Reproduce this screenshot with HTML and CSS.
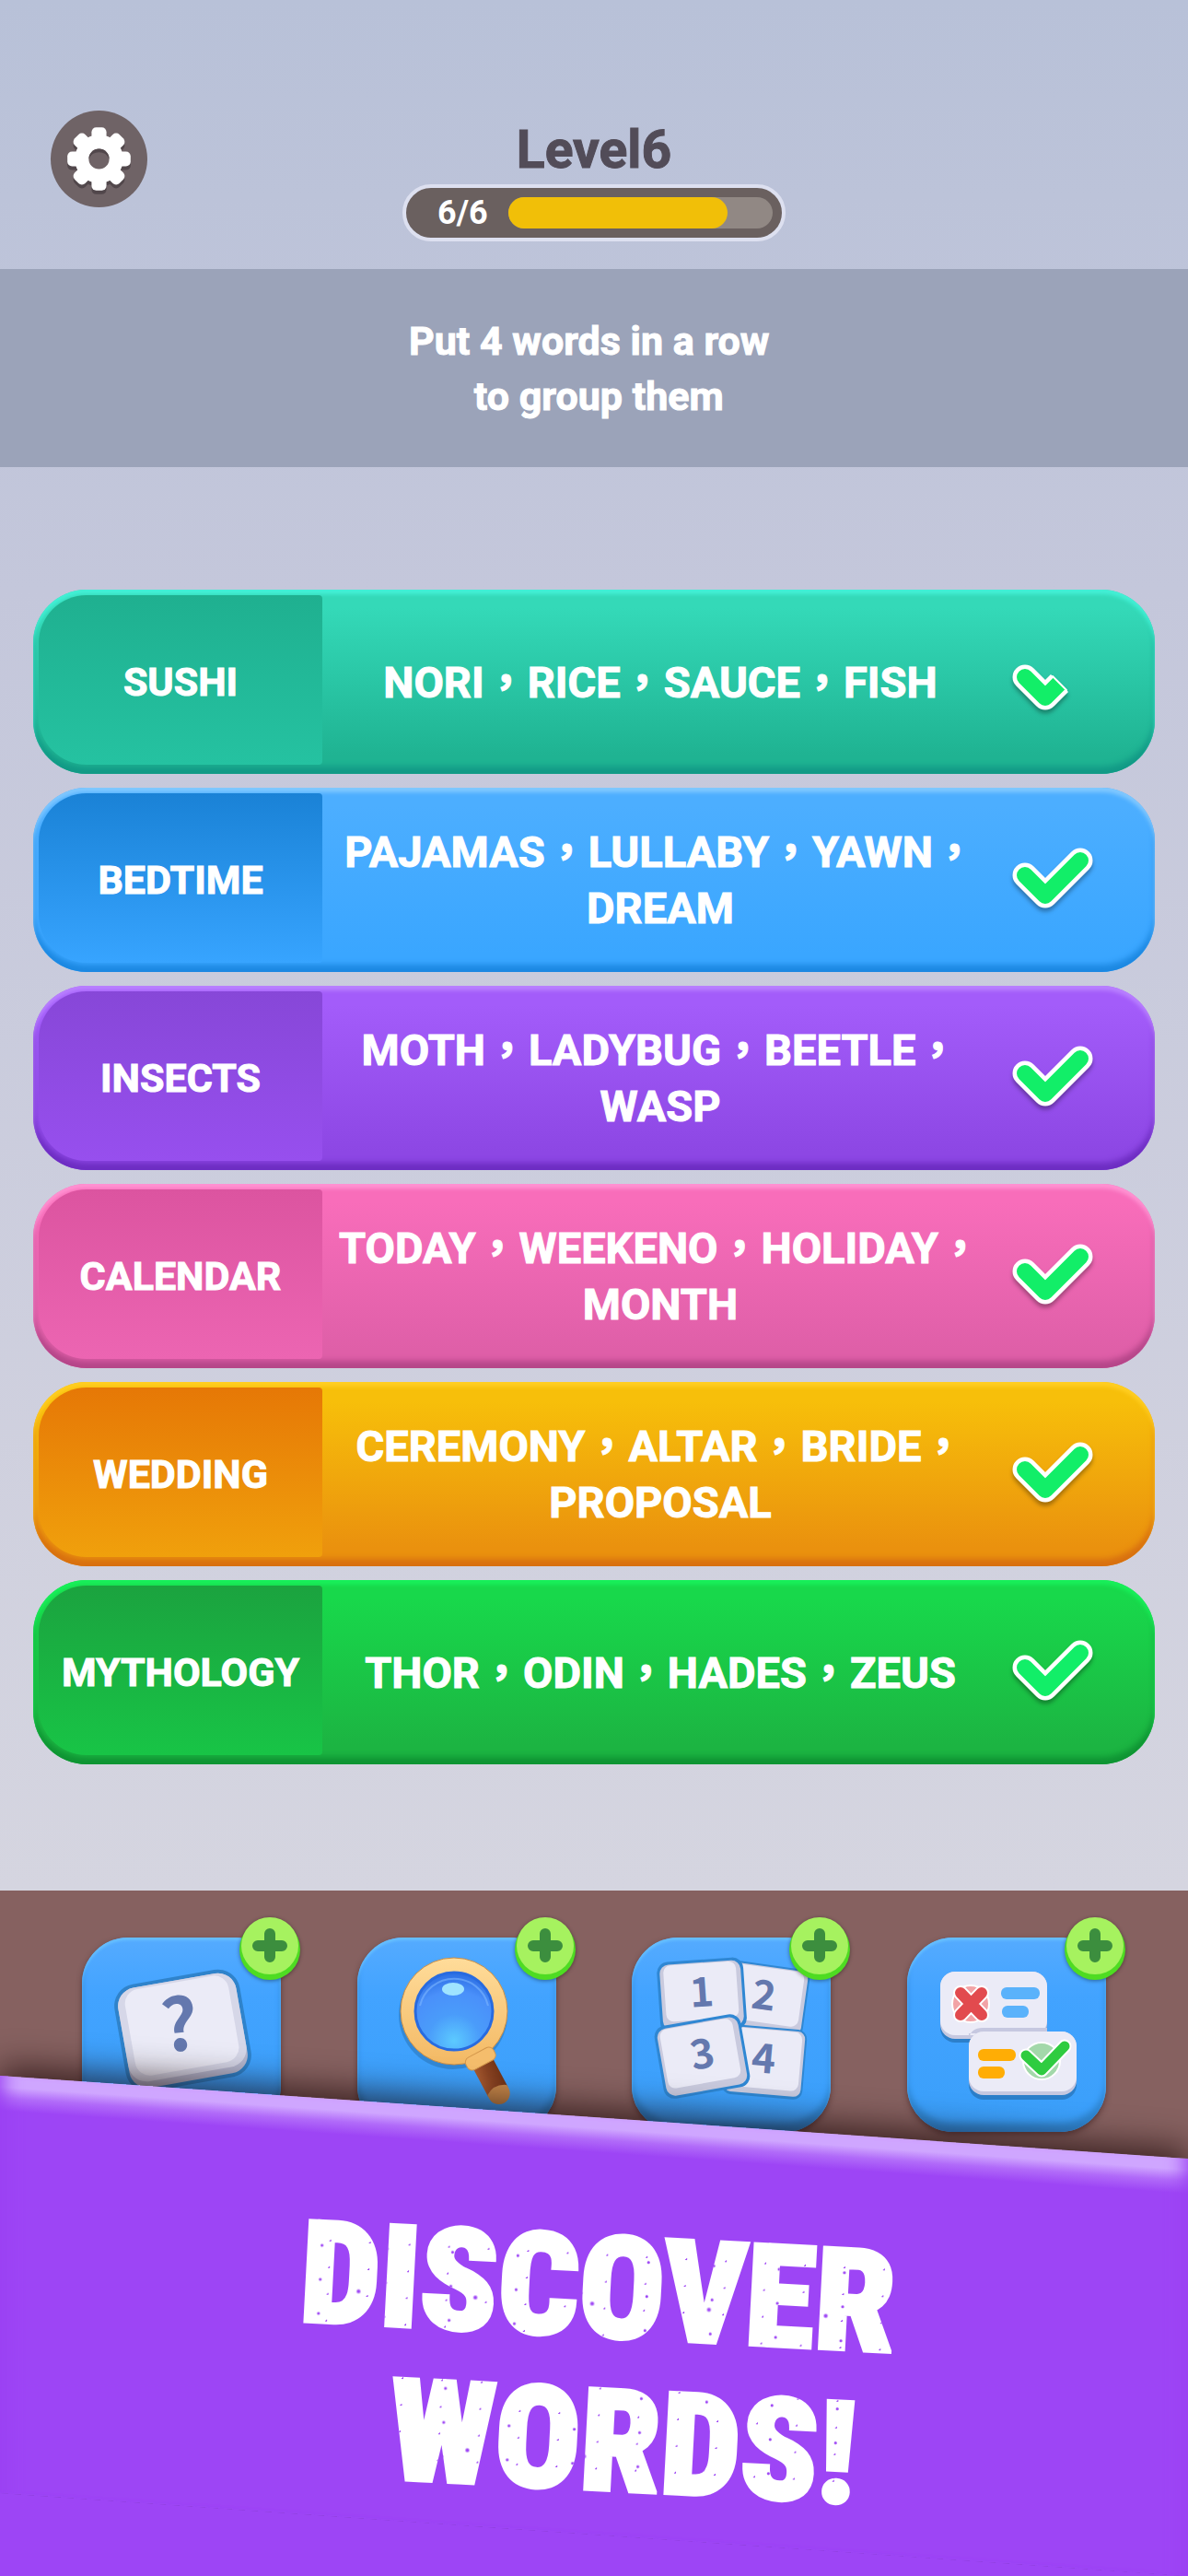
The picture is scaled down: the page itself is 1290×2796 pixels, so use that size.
FILE: index.html
```html
<!DOCTYPE html>
<html lang="en">
<head>
    <meta charset="UTF-8">
    <meta name="viewport" content="width=device-width, initial-scale=1.0">
    <title>Level6</title>
    <link rel="stylesheet" href="styles.css">
</head>
<body>
    <!-- shared shapes -->
    <svg class="defs" aria-hidden="true">
        <defs>
            <linearGradient id="gold" x1="0" y1="0" x2="0" y2="1">
                <stop offset="0" stop-color="#ffdc9a"/>
                <stop offset="1" stop-color="#f3b964"/>
            </linearGradient>
            <radialGradient id="glass" cx="50%" cy="88%" r="85%">
                <stop offset="0" stop-color="#5ccaff"/>
                <stop offset="0.4" stop-color="#4a9cfa"/>
                <stop offset="0.75" stop-color="#4a90fa"/>
                <stop offset="1" stop-color="#2f72e6"/>
            </radialGradient>
            <linearGradient id="wood" x1="0" y1="0" x2="1" y2="0">
                <stop offset="0" stop-color="#a85a30"/>
                <stop offset="0.5" stop-color="#8a4322"/>
                <stop offset="1" stop-color="#743518"/>
            </linearGradient>
            <clipPath id="half">
                <path d="M-10 -25 L68 53 L40 90 L-10 80 Z"/>
            </clipPath>
            <symbol id="check" viewBox="0 0 92 76">
                <path class="check-line" d="M16 32 L38 54 L76 16"/>
                <path class="check-fill" d="M16 32 L38 54 L76 16"/>
            </symbol>
            <symbol id="plus" viewBox="0 0 66 68">
                <circle cx="33" cy="35" r="33" fill="#4edc22"/>
                <circle cx="33" cy="31" r="31" fill="#a6f25f"/>
                <path d="M33 18 V43 M20 31 H46" stroke="#3c8e3e" stroke-width="12" stroke-linecap="round"/>
            </symbol>
            <g id="gear">
                <circle r="26"/>
                <rect x="-8" y="-34" width="16" height="68" rx="5"/>
                <rect x="-8" y="-34" width="16" height="68" rx="5" transform="rotate(45)"/>
                <rect x="-8" y="-34" width="16" height="68" rx="5" transform="rotate(90)"/>
                <rect x="-8" y="-34" width="16" height="68" rx="5" transform="rotate(135)"/>
            </g>
        </defs>
    </svg>

    <header class="topbar">
        <button class="settings" type="button" aria-label="Settings">
            <svg viewBox="-52 -52 104 104">
                <use href="#gear" y="4" fill="#51474b"/>
                <use href="#gear" fill="#fff"/>
                <circle r="11" fill="#6f6366"/>
                <path d="M-11 0 A11 11 0 0 1 11 0 A12 12 0 0 0 -11 0 Z" fill="#51474b"/>
            </svg>
        </button>
        <div class="level">
            <h1>Level6</h1>
            <div class="progress">
                <span>6/6</span>
                <div class="track"><div class="fill" style="width: 83%"></div></div>
            </div>
        </div>
    </header>

    <p class="hint">Put 4 words in a row&nbsp;<br>&nbsp;to group them</p>

    <ul class="groups">
        <li class="group teal">
            <h2>SUSHI</h2>
            <p>NORI，RICE，SAUCE，FISH</p>
            <svg class="check" viewBox="0 0 92 76">
                <g clip-path="url(#half)">
                    <path class="check-line" d="M16 32 L38 54 L76 16"/>
                    <path class="check-fill" d="M16 32 L38 54 L76 16"/>
                </g>
                <path d="M46 31 L61 46" stroke="#fff" stroke-width="2" stroke-linecap="round"/>
            </svg>
        </li>
        <li class="group blue">
            <h2>BEDTIME</h2>
            <p>PAJAMAS，LULLABY，YAWN，DREAM</p>
            <svg class="check"><use href="#check"/></svg>
        </li>
        <li class="group violet">
            <h2>INSECTS</h2>
            <p>MOTH，LADYBUG，BEETLE，WASP</p>
            <svg class="check"><use href="#check"/></svg>
        </li>
        <li class="group pink">
            <h2>CALENDAR</h2>
            <p>TODAY，WEEKENO，HOLIDAY，MONTH</p>
            <svg class="check"><use href="#check"/></svg>
        </li>
        <li class="group amber">
            <h2>WEDDING</h2>
            <p>CEREMONY，ALTAR，BRIDE，PROPOSAL</p>
            <svg class="check"><use href="#check"/></svg>
        </li>
        <li class="group green">
            <h2>MYTHOLOGY</h2>
            <p>THOR，ODIN，HADES，ZEUS</p>
            <svg class="check"><use href="#check"/></svg>
        </li>
    </ul>

    <nav class="tools">
        <button class="tool" type="button" aria-label="Hint">
            <svg viewBox="0 0 216 211">
                <g transform="translate(109 98) rotate(-10)">
                    <rect x="-69" y="-56" width="138" height="118" rx="24" fill="#2f83cb"/>
                    <rect x="-65" y="-52" width="130" height="110" rx="20" fill="#b6b8d0"/>
                    <rect x="-65" y="-52" width="130" height="103" rx="20" fill="#d6d7e8"/>
                    <rect x="-57" y="-50" width="114" height="95" rx="16" fill="#ebebf7"/>
                </g>
                <text class="glyph big" x="106" y="123" transform="rotate(-6 105 94)">?</text>
            </svg>
            <svg class="badge"><use href="#plus"/></svg>
        </button>
        <button class="tool" type="button" aria-label="Search">
            <svg viewBox="0 0 216 211">
                <circle cx="104" cy="84" r="59" fill="#2c78bd" opacity="0.6"/>
                <g transform="translate(134 132) rotate(-28)">
                    <path d="M-12 4 H12 V40 H-12 Z" fill="url(#wood)"/>
                    <path d="M-12 38 Q0 30 12 38 V42 A12 12 0 0 1 -12 42 Z" fill="#c98a4c"/>
                </g>
                <circle cx="105" cy="80" r="58" fill="url(#gold)" stroke="#c98d45" stroke-width="1"/>
                <circle cx="105" cy="80" r="42" fill="url(#glass)" stroke="#286be0" stroke-width="3"/>
                <path d="M68 74 A38 38 0 0 1 142 74" fill="none" stroke="#7cb6ff" stroke-width="2" opacity="0.6"/>
                <ellipse cx="104" cy="56" rx="12" ry="7" fill="#9fe3ff"/>
                <rect x="-17" y="-8" width="34" height="15" rx="6" fill="#f5bd6c" stroke="#d3974c" stroke-width="1" transform="translate(134 132) rotate(-28)"/>
            </svg>
            <svg class="badge"><use href="#plus"/></svg>
        </button>
        <button class="tool" type="button" aria-label="Shuffle">
            <svg viewBox="0 0 216 211">
                <g transform="translate(148 66) rotate(8)">
                    <rect class="tile-edge" x="-44" y="-36" width="86" height="74" rx="10"/>
                    <rect class="tile-side" x="-42" y="-34" width="82" height="69" rx="8"/>
                    <rect class="tile-face" x="-38" y="-33" width="74" height="60" rx="8"/>
                    <text class="glyph" x="-5" y="13">2</text>
                </g>
                <g transform="translate(144 134) rotate(5)">
                    <rect class="tile-edge" x="-44" y="-37" width="88" height="76" rx="10"/>
                    <rect class="tile-side" x="-42" y="-35" width="84" height="71" rx="8"/>
                    <rect class="tile-face" x="-40" y="-34" width="79" height="64" rx="8"/>
                    <text class="glyph" x="-1" y="13">4</text>
                </g>
                <g transform="translate(76 62) rotate(-4)">
                    <rect class="tile-edge" x="-47" y="-38" width="94" height="78" rx="12"/>
                    <rect class="tile-side" x="-44" y="-35" width="88" height="71" rx="10"/>
                    <rect class="tile-face" x="-40" y="-34" width="79" height="61" rx="8"/>
                    <text class="glyph" x="0" y="13">1</text>
                </g>
                <g transform="translate(77 129) rotate(-10)">
                    <rect class="tile-edge" x="-48" y="-40" width="95" height="80" rx="12"/>
                    <rect class="tile-side" x="-45" y="-37" width="89" height="74" rx="10"/>
                    <rect class="tile-face" x="-42" y="-36" width="80" height="65" rx="8"/>
                    <text class="glyph" x="0" y="13">3</text>
                </g>
            </svg>
            <svg class="badge"><use href="#plus"/></svg>
        </button>
        <button class="tool" type="button" aria-label="Check answers">
            <svg viewBox="0 0 216 211">
                <rect x="36" y="42" width="116" height="72" rx="16" fill="#2c7fca"/>
                <rect x="36" y="37" width="116" height="73" rx="16" fill="#c6c8e0"/>
                <rect x="36" y="37" width="116" height="69" rx="16" fill="#ebebf7"/>
                <circle cx="69" cy="72" r="20" fill="#f2a3a6" stroke="#fff" stroke-width="2"/>
                <path d="M58 60 L81 84 M81 60 L58 84" stroke="#fff" stroke-width="16" stroke-linecap="round"/>
                <path d="M58 60 L81 84 M81 60 L58 84" stroke="#e24a4e" stroke-width="12" stroke-linecap="round"/>
                <rect x="102" y="54" width="42" height="13" rx="6" fill="#5ab2fb"/>
                <rect x="103" y="74" width="29" height="13" rx="6" fill="#5ab2fb"/>
                <path d="M67 110 Q69 98 82 98 H152 V104 H67 Z" fill="#c6c8e0"/>
                <rect x="67" y="107" width="117" height="69" rx="16" fill="#2c7fca"/>
                <rect x="67" y="102" width="117" height="69" rx="16" fill="#c6c8e0"/>
                <rect x="67" y="102" width="117" height="65" rx="16" fill="#ebebf7"/>
                <rect x="77" y="121" width="41" height="13" rx="6" fill="#ffad05"/>
                <rect x="77" y="140" width="29" height="13" rx="6" fill="#ffad05"/>
                <circle cx="146" cy="134" r="20" fill="#a3d8aa" stroke="#fff" stroke-width="2"/>
                <path d="M129 128 L146 144 L171 118" fill="none" stroke="#fff" stroke-width="15" stroke-linecap="round" stroke-linejoin="round"/>
                <path d="M129 128 L146 144 L171 118" fill="none" stroke="#2fcc40" stroke-width="11" stroke-linecap="round" stroke-linejoin="round"/>
            </svg>
            <svg class="badge"><use href="#plus"/></svg>
        </button>
    </nav>

    <section class="banner">
        <p class="slogan">DISCOVER<br>&nbsp;&nbsp;WORDS!</p>
    </section>
</body>
</html>
```
FILE: styles.css
```css
* {
    box-sizing: border-box;
}
body {
    margin: 0;
    min-height: 100vh;
    display: flex;
    flex-direction: column;
    overflow-x: hidden;
    font-family: Roboto, "Noto Sans CJK TC", sans-serif;
    font-weight: 700;
    color: #fff;
    background: linear-gradient(#b8c1d8 0, #c4c7db 640px, #d5d5e0 2050px);
}
h1, h2, p, ul {
    margin: 0;
    padding: 0;
}
h1, h2, p {
    -webkit-text-stroke: 1px;
}
button {
    border: none;
    padding: 0;
    cursor: pointer;
}
.defs {
    position: absolute;
    width: 0;
    height: 0;
}

/* header */
.topbar {
    display: grid;
    grid-template-columns: 1fr auto 1fr;
    padding: 120px 55px 30px;
}
.settings {
    width: 105px;
    height: 105px;
    border-radius: 50%;
    background: #6f6366;
}
.settings svg {
    display: block;
    width: 100%;
}
.level h1 {
    padding-top: 6px;
    font-size: 57px;
    line-height: 74px;
    text-align: center;
    color: #524c58;
}
.progress {
    display: flex;
    align-items: center;
    gap: 22px;
    width: 416px;
    height: 62px;
    padding: 0 10px 0 34px;
    border: 4px solid #dde0f0;
    border-radius: 31px;
    background: #6a605f;
    font-size: 36px;
}
.track {
    flex: 1;
    height: 34px;
    border-radius: 17px;
    background: #918884;
}
.fill {
    height: 100%;
    border-radius: 17px;
    background: #f1bf08;
}

.hint {
    padding: 48px 0 47px;
    background: #9ba3b9;
    font-size: 43px;
    line-height: 60px;
    text-align: center;
}

/* solved groups */
.groups {
    display: flex;
    flex-direction: column;
    gap: 15px;
    padding: 133px 36px 137px;
    list-style: none;
}
.group {
    display: grid;
    grid-template-columns: 308px 1fr 176px;
    align-items: center;
    min-height: 200px;
    padding: 6px 6px 10px;
    border-radius: 58px;
    background: linear-gradient(var(--top) 10%, var(--bottom) 90%);
    box-shadow: inset 0 5px 4px var(--light), inset 0 -8px 6px var(--dark);
}
.group h2 {
    align-self: stretch;
    display: flex;
    align-items: center;
    justify-content: center;
    padding-top: 4px;
    border-radius: 52px 4px 4px 52px;
    background: linear-gradient(var(--label-top), var(--label-bottom));
    font-size: 43px;
}
.group p {
    padding: 4px 0 0 12px;
    font-size: 47px;
    line-height: 61px;
    text-align: center;
}
.check {
    width: 92px;
    height: 76px;
    margin: 6px 0 0 25px;
    overflow: visible;
    filter: drop-shadow(0 4px 2px rgba(0, 0, 0, 0.3));
}
.check-line, .check-fill {
    fill: none;
    stroke: #fff;
    stroke-width: 27;
    stroke-linecap: round;
    stroke-linejoin: round;
}
.check-fill {
    stroke: #12ee68;
    stroke-width: 18;
}
.teal {
    --top: #34d9b8; --bottom: #1fb392;
    --label-top: #1fb090; --label-bottom: #25c2a1;
    --light: #43f0d6; --dark: #129a86;
}
.blue {
    --top: #4caeff; --bottom: #3aa6ff;
    --label-top: #1a82d6; --label-bottom: #37a4ff;
    --light: #80c8ff; --dark: #1c88e2;
}
.violet {
    --top: #a35cfa; --bottom: #8d47e4;
    --label-top: #8747d8; --label-bottom: #974fee;
    --light: #b980ff; --dark: #6d2dc2;
}
.pink {
    --top: #f86dba; --bottom: #df5fa8;
    --label-top: #dc54a0; --label-bottom: #ec65b2;
    --light: #ff92d2; --dark: #b54689;
}
.amber {
    --top: #f7bf0a; --bottom: #ea910e;
    --label-top: #e67806; --label-bottom: #f0a00c;
    --light: #ffce22; --dark: #d87010;
}
.green {
    --top: #18d84b; --bottom: #1cb442;
    --label-top: #1ba33f; --label-bottom: #18c446;
    --light: #18f05a; --dark: #0f9433;
}

/* boosters */
.tools {
    display: flex;
    justify-content: space-between;
    padding: 51px 89px 60px;
    background: #866160;
}
.tool {
    position: relative;
    width: 216px;
    height: 211px;
    border-radius: 50px;
    background: linear-gradient(#55abff, #42a3ff 30%, #3a9ffa);
    box-shadow: inset 0 3px 3px #66bfff, inset 0 -10px 6px #2f86d2, 0 3px 6px rgba(50, 20, 20, 0.5);
}
.tool svg {
    display: block;
    width: 100%;
}
.tool .badge {
    position: absolute;
    top: -22px;
    right: -21px;
    width: 66px;
    height: 68px;
    filter: drop-shadow(0 1px 2px rgba(0, 0, 0, 0.4));
}
.glyph {
    font: 700 44px "Noto Sans CJK SC", sans-serif;
    fill: #6478ae;
    text-anchor: middle;
}
.glyph.big {
    font-size: 78px;
}
.tile-edge {
    fill: #2f87d3;
}
.tile-side {
    fill: #c9cade;
}
.tile-face {
    fill: #ebebf7;
}

/* tilted promo banner */
.banner {
    position: relative;
    flex: 1;
    display: flex;
    align-items: center;
    justify-content: center;
    min-height: 498px;
    margin-top: -76px;
    padding-top: 40px;
    background: linear-gradient(transparent 200px, #9d45f5 200px);
}
.banner::before {
    content: "";
    position: absolute;
    inset: 0 0 45px;
    background: linear-gradient(#cfa6ff 12px, #b16bf9 24px, #9d45f5 38px);
    box-shadow: inset 24px 0 20px -20px #9a40f2, inset -24px 0 20px -20px #9a40f2, 0 -10px 36px rgba(20, 0, 0, 0.65);
    transform: skewY(4deg);
    clip-path: inset(-80px 0 0);
}
.slogan {
    position: relative;
    font-family: "Roboto Condensed", "Open Sans Condensed", "Noto Sans CJK SC", sans-serif;
    font-size: 154px;
    font-weight: 900;
    line-height: 166px;
    text-align: center;
    transform: rotate(3deg);
    /* worn-print specks showing through the letters */
    color: transparent;
    -webkit-text-stroke: 4px transparent;
    background:
        radial-gradient(circle at 30% 40%, #9d45f5 1px, transparent 2px) 0 0 / 71px 37px,
        radial-gradient(circle at 70% 60%, #9d45f5 1px, transparent 1px) 0 0 / 43px 29px,
        radial-gradient(circle at 50% 20%, #9d45f5 1px, transparent 3px) 0 0 / 127px 83px,
        #fff;
    -webkit-background-clip: text;
    background-clip: text;
}
```
